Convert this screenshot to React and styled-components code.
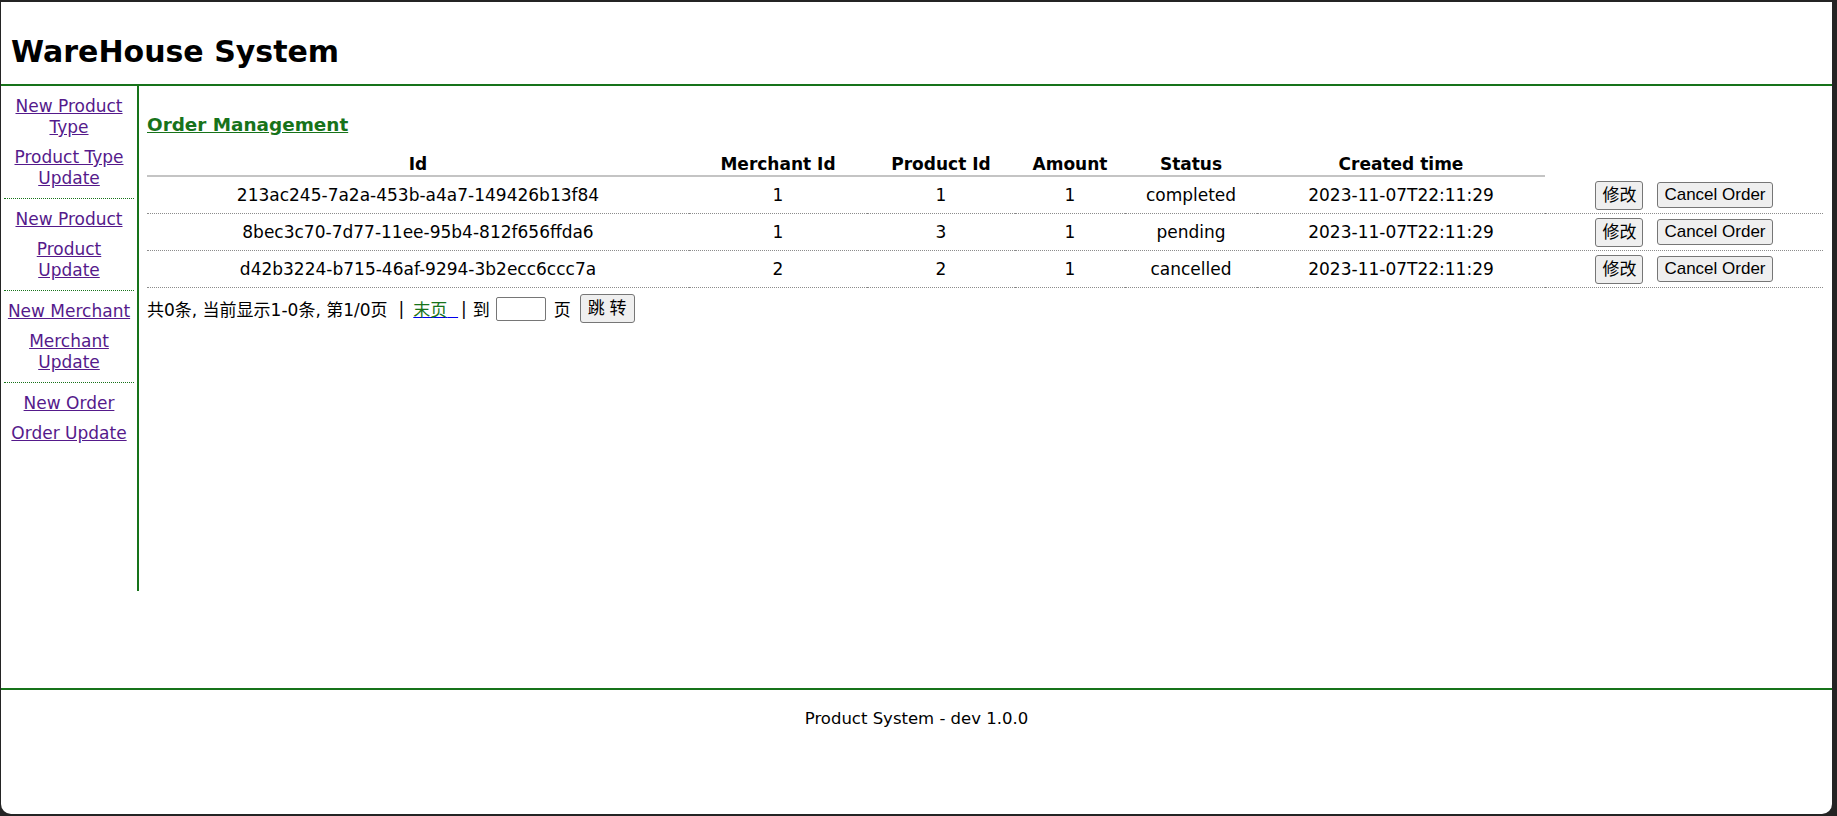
import React from "react";
import styled, { createGlobalStyle } from "styled-components";

const GREEN = "#17731a";

const orders = [
  {
    id: "213ac245-7a2a-453b-a4a7-149426b13f84",
    merchantId: 1,
    productId: 1,
    amount: 1,
    status: "completed",
    created: "2023-11-07T22:11:29",
  },
  {
    id: "8bec3c70-7d77-11ee-95b4-812f656ffda6",
    merchantId: 1,
    productId: 3,
    amount: 1,
    status: "pending",
    created: "2023-11-07T22:11:29",
  },
  {
    id: "d42b3224-b715-46af-9294-3b2ecc6ccc7a",
    merchantId: 2,
    productId: 2,
    amount: 1,
    status: "cancelled",
    created: "2023-11-07T22:11:29",
  },
];

const navGroups = [
  ["New Product Type", "Product Type Update"],
  ["New Product", "Product Update"],
  ["New Merchant", "Merchant Update"],
  ["New Order", "Order Update"],
];

const columns = [
  { title: "Id", width: 542 },
  { title: "Merchant Id", width: 178 },
  { title: "Product Id", width: 148 },
  { title: "Amount", width: 110 },
  { title: "Status", width: 132 },
  { title: "Created time", width: 288 },
  { title: "", width: 278 },
];

const App = () => {
  return (
    <>
      <GlobalStyle />
      <Frame>
        <Window>
          <Header>
            <Title>WareHouse System</Title>
          </Header>
          <Body>
            <Sidebar>
              {navGroups.map((group, i) => (
                <NavGroup key={i} $last={i === navGroups.length - 1}>
                  {group.map((label) => (
                    <NavLink key={label} href="#">
                      {label}
                    </NavLink>
                  ))}
                </NavGroup>
              ))}
            </Sidebar>
            <Main>
              <PageTitleRow>
                <PageTitle href="#">Order Management</PageTitle>
              </PageTitleRow>
              <Table>
                <colgroup>
                  {columns.map((c, i) => (
                    <col key={i} style={{ width: c.width }} />
                  ))}
                </colgroup>
                <thead>
                  <tr>
                    {columns.map((c, i) => (
                      <Th key={i} $plain={!c.title}>
                        {c.title}
                      </Th>
                    ))}
                  </tr>
                </thead>
                <tbody>
                  {orders.map((o) => (
                    <tr key={o.id}>
                      <Td>{o.id}</Td>
                      <Td>{o.merchantId}</Td>
                      <Td>{o.productId}</Td>
                      <Td>{o.amount}</Td>
                      <Td>{o.status}</Td>
                      <Td>{o.created}</Td>
                      <Td>
                        <Actions>
                          <Button $cjk>修改</Button>
                          <Button>Cancel Order</Button>
                        </Actions>
                      </Td>
                    </tr>
                  ))}
                </tbody>
              </Table>
              <Pager>
                <span>共0条, 当前显示1-0条, 第1/0页</span>
                <Sep $left={11} $right={9}>|</Sep>
                <PagerLink href="#">
                  <GreenText>末页</GreenText>
                  {"\u00a0\u00a0"}
                </PagerLink>
                <Sep $left={3} $right={6}>|</Sep>
                <span>到</span>
                <PageInput type="text" />
                <span>页</span>
                <JumpButton $cjk>跳 转</JumpButton>
              </Pager>
            </Main>
          </Body>
          <Footer>Product System - dev 1.0.0</Footer>
        </Window>
      </Frame>
    </>
  );
};

export default App;

const GlobalStyle = createGlobalStyle`
  html, body {
    margin: 0;
    padding: 0;
    background: #242424;
  }
  body {
    font-family: "DejaVu Sans", "Noto Sans CJK SC", sans-serif;
    font-size: 17px;
    color: #000;
  }
`;

const Frame = styled.div`
  width: 1837px;
  height: 816px;
  box-sizing: border-box;
  padding: 2px 5px 2px 1px;
`;

const Window = styled.div`
  height: 100%;
  background: #fff;
  border-radius: 0 0 10px 10px;
  overflow: hidden;
  display: flex;
  flex-direction: column;
`;

const Header = styled.div`
  height: 84px;
  box-sizing: border-box;
  padding: 32px 0 0 10px;
  border-bottom: 2px solid ${GREEN};
  flex-shrink: 0;
`;

const Title = styled.h1`
  margin: 0;
  font-size: 30px;
  line-height: 36px;
  font-weight: bold;
`;

const Body = styled.div`
  display: flex;
  height: 505px;
  flex-shrink: 0;
`;

const Sidebar = styled.div`
  width: 136px;
  border-right: 2px solid ${GREEN};
  flex-shrink: 0;
`;

const NavGroup = styled.div`
  margin: 0 3px;
  padding: 10px 0 9px;
  display: flex;
  flex-direction: column;
  align-items: center;
  gap: 9px;
  border-bottom: ${({ $last }) => ($last ? "none" : `1px dotted ${GREEN}`)};
`;

const NavLink = styled.a`
  color: #551a8b;
  font-size: 17px;
  line-height: 21px;
  text-align: center;
  text-decoration: underline;
`;

const Main = styled.div`
  flex: 1;
  padding: 28px 9px 0 8px;
  min-width: 0;
`;

const PageTitleRow = styled.div`
  line-height: 22px;
  margin-bottom: 17px;
`;

const PageTitle = styled.a`
  color: ${GREEN};
  font-size: 18.4px;
  font-weight: bold;
  text-decoration: underline;
`;

const Table = styled.table`
  width: 100%;
  table-layout: fixed;
  border-collapse: separate;
  border-spacing: 0;
`;

const Th = styled.th`
  font-size: 17px;
  font-weight: bold;
  line-height: 20px;
  padding: 1px 0;
  text-align: center;
  border-bottom: ${({ $plain }) => ($plain ? "none" : "2px solid #c4c4c4")};
`;

const Td = styled.td`
  height: 36px;
  padding: 0;
  font-size: 17px;
  line-height: 20px;
  text-align: center;
  vertical-align: middle;
  white-space: nowrap;
  border-bottom: 1px dotted #8c8c8c;
`;

const Actions = styled.div`
  display: flex;
  justify-content: center;
  align-items: center;
  gap: 14px;
`;

const Button = styled.button`
  font-family: "Liberation Sans", "Noto Sans CJK SC", sans-serif;
  font-size: 17px;
  line-height: ${({ $cjk }) => ($cjk ? "27px" : "24px")};
  padding: 0 6px;
  margin: 0;
  color: #000;
  background: #efefef;
  border: 1px solid #767676;
  border-radius: 3px;
  vertical-align: middle;
`;

const JumpButton = styled(Button)`
  padding: 0 7px;
  margin-left: 9px;
`;

const Pager = styled.div`
  margin-top: 6px;
  height: 29px;
  display: flex;
  align-items: center;
  font-size: 17px;
  white-space: nowrap;
`;

const Sep = styled.span`
  margin: 0 ${({ $right }) => $right}px 0 ${({ $left }) => $left}px;
`;

const PagerLink = styled.a`
  color: #0000ee;
  text-decoration: underline;
`;

const GreenText = styled.span`
  color: ${GREEN};
`;

const PageInput = styled.input`
  width: 50px;
  height: 24px;
  box-sizing: border-box;
  margin: 0 8px 0 6px;
  padding: 0 2px;
  border: 1px solid #767676;
  border-radius: 2px;
`;

const Footer = styled.div`
  margin-top: 97px;
  border-top: 2px solid ${GREEN};
  padding-top: 19px;
  text-align: center;
  font-size: 16.5px;
  line-height: 20px;
`;
